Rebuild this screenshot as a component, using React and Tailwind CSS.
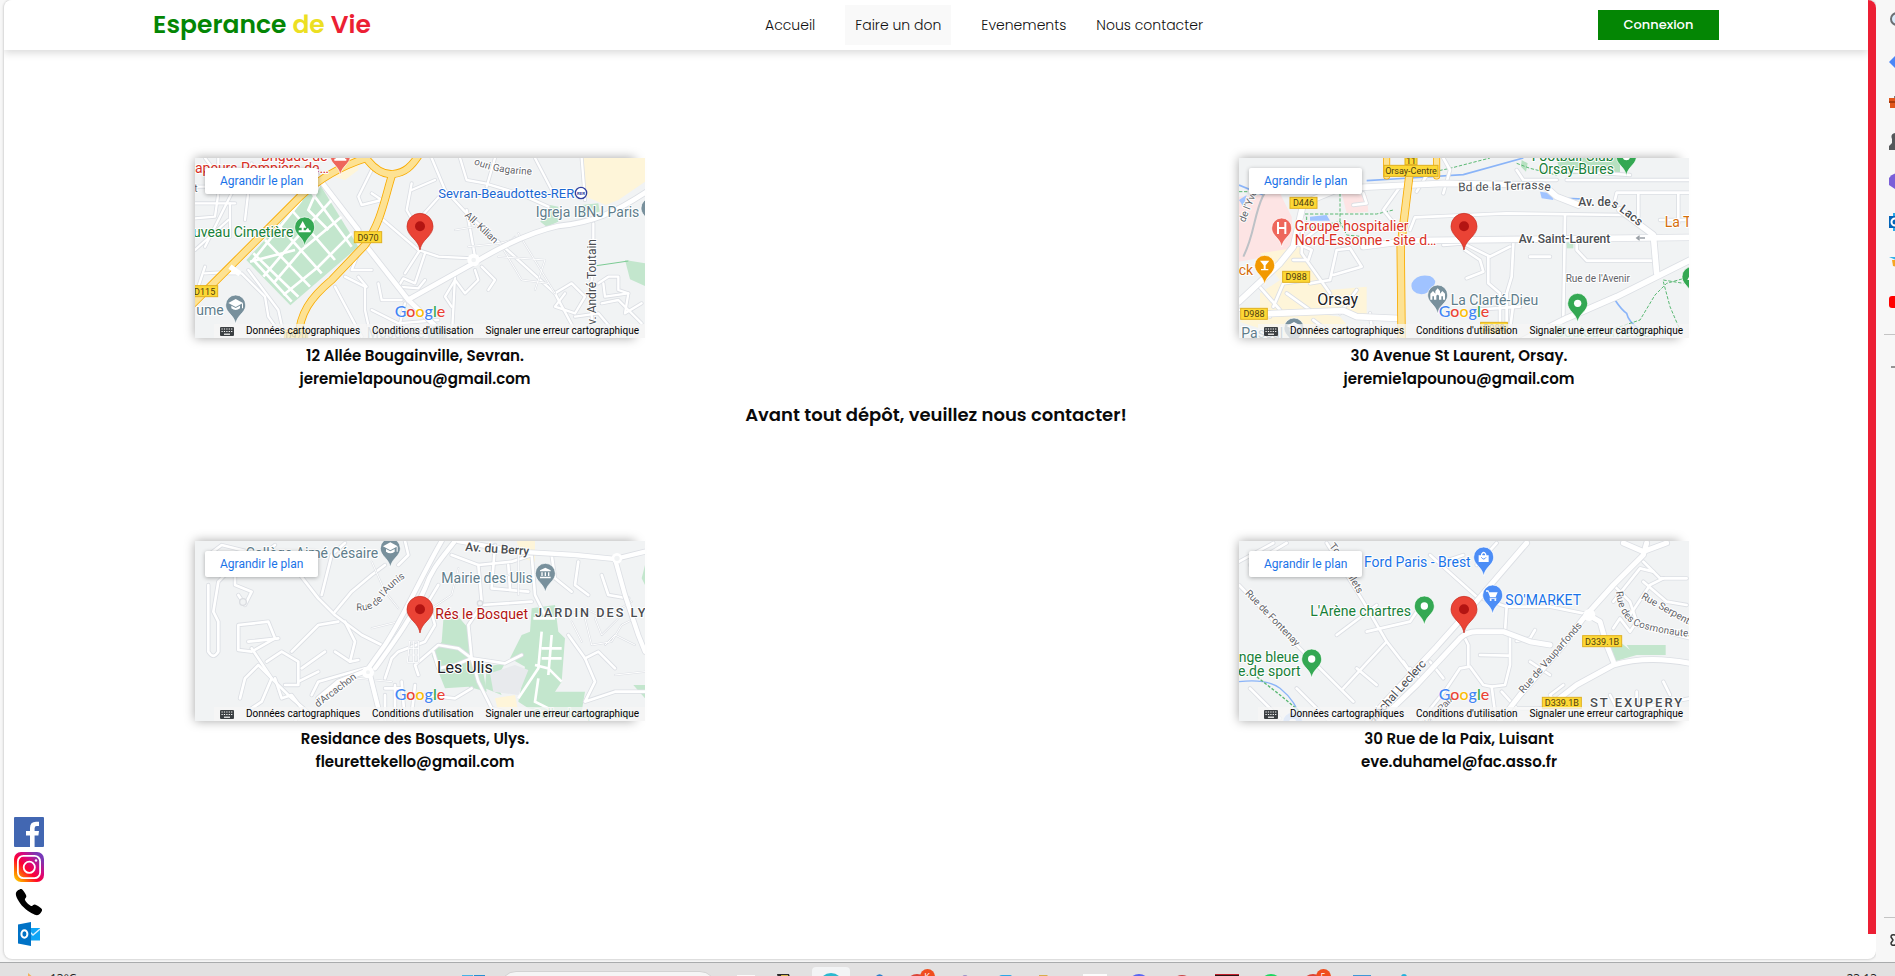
import React from "react";
import { IoCall } from "react-icons/io5";

const GREY = "#5f6368";
const SLATE = "#607d8b";
const GREEN = "#188038";

/* ---------- Map drawing helpers ---------- */

function Roads({ w = 9, casing = "#dcdfe4", fill = "#ffffff", extra = 5, paths }) {
  return (
    <g fill="none" strokeLinecap="round" strokeLinejoin="round">
      {paths.map((d, i) => (
        <path key={"c" + i} d={d} stroke={casing} strokeWidth={w + extra} />
      ))}
      {paths.map((d, i) => (
        <path key={"f" + i} d={d} stroke={fill} strokeWidth={w} />
      ))}
    </g>
  );
}

function Label({ x, y, size = 42, color = GREY, weight = 400, angle = 0, spacing, children }) {
  return (
    <text
      x={x}
      y={y}
      fontSize={size}
      fill={color}
      fontWeight={weight}
      transform={angle ? `rotate(${angle} ${x} ${y})` : undefined}
      stroke="#ffffff"
      strokeWidth="6"
      strokeLinejoin="round"
      paintOrder="stroke"
      letterSpacing={spacing}
    >
      {children}
    </text>
  );
}

function CurvedLabel({ id, d, size = 30, color = GREY, weight = 400, children }) {
  return (
    <g>
      <path id={id} d={d} fill="none" />
      <text fontSize={size} fill={color} fontWeight={weight} stroke="#ffffff" strokeWidth="6" paintOrder="stroke">
        <textPath href={"#" + id}>{children}</textPath>
      </text>
    </g>
  );
}

function Shield({ x, y, w, h = 33, children }) {
  return (
    <g>
      <rect x={x} y={y} width={w} height={h} fill="#fdd835" stroke="#e0b020" strokeWidth="3" />
      <text x={x + w / 2} y={y + h / 2 + 10} textAnchor="middle" fontSize="27" fill="#4d3d10">
        {children}
      </text>
    </g>
  );
}

function Pin({ x, y, color, children }) {
  return (
    <g transform={`translate(${x} ${y})`}>
      <path
        d="M0 57C-3 40-12 33-21 22C-27 15-30 8-30 0A30 30 0 1 1 30 0C30 8 27 15 21 22C12 33 3 40 0 57Z"
        fill={color}
        stroke="#ffffff"
        strokeWidth="2"
      />
      {children}
    </g>
  );
}

const Dot = () => <circle r="11" fill="#fff" />;
const Cap = () => (
  <g fill="#fff">
    <path d="M0-18L22-6L0 6L-22-6Z" />
    <path d="M-13 2V10Q0 20 13 10V2L0 9Z" />
    <path d="M19-5H22V10H19Z" />
  </g>
);
const Church = () => (
  <path d="M-22 14V-4L-14-12L-7-4V-12L0-20L7-12V-4L14-12L22-4V14H16V4H11V14H4V2Q0-4-4 2V14H-11V4H-16V14Z" fill="#fff" />
);

function Marker({ x, y }) {
  return (
    <g transform={`translate(${x} ${y})`}>
      <path
        d="M0 71C-4 50-15 42-27 28C-35 19-39 10-39 0A39 39 0 1 1 39 0C39 10 35 19 27 28C15 42 4 50 0 71Z"
        fill="#ea4335"
        stroke="#c5291c"
        strokeWidth="2"
      />
      <circle r="15" fill="#b31412" />
    </g>
  );
}

function MapFrame({ viewBox, children }) {
  return (
    <svg
      viewBox={viewBox}
      className="block h-[180px] w-[450px] bg-[#f1f3f4]"
      fontFamily="Roboto, Arial, sans-serif"
      aria-hidden="true"
    >
      {children}
    </svg>
  );
}

/* ---------- The four maps ---------- */

function SevranMap() {
  return (
    <MapFrame viewBox="30 24 1350 540">
      <path d="M1190 24H1380V95L1300 150L1262 165L1178 130L1200 90Z" fill="#fef5d9" />
      <path d="M455 24H520V60L480 90L448 80Z" fill="#fef5d9" />
      <path d="M1320 330L1380 340V408L1335 388Z" fill="#c3e6cd" />
      <path d="M1066 215L1095 165L1120 170V215L1085 230Z" fill="#c3e6cd" />
      <path d="M1190 165L1240 160L1244 185L1190 195Z" fill="#c3e6cd" />
      <path d="M1235 347L1330 333" stroke="#7ccb94" strokeWidth="3" />
      <Roads
        w={7}
        paths={[
          "M30 110H180L240 30", "M100 24V130L90 200L30 205", "M30 160H150", "M140 130L60 290", "M200 40L180 210",
          "M30 300L130 210", "M60 24L110 90", "M135 160V260", "M30 250H110",
          "M740 24L780 120L845 190L945 280L1110 430L1185 570", "M825 24L845 90L900 100L1000 130L1090 170",
          "M845 180L870 320", "M1050 24L1100 120L1180 130", "M560 130L590 150L530 165L520 140L560 60",
          "M930 24L905 110", "M780 120L700 210", "M595 210L700 300L760 320L860 325", "M680 100L665 180L700 240",
          "M750 90L680 120", "M720 310L690 400L655 385L640 410L700 415L720 390", "M705 300L660 370",
          "M870 360L880 390L840 430L810 390L780 440L800 470", "M890 350L930 390L910 420",
          "M1225 220V360L1215 420L1225 570", "M1110 430L1160 400L1200 440L1170 490L1110 470L1140 430",
          "M1240 400L1270 380L1300 380L1300 420L1330 430L1260 440L1255 400", "M1250 460L1300 450L1370 520",
          "M1330 430L1320 490L1370 460", "M1170 500L1240 490L1300 560", "M520 310L500 360L560 360",
          "M480 380L540 410V480L560 570", "M520 380L545 410", "M450 410L530 560", "M580 400L590 450H650",
          "M810 380L800 570", "M660 460L640 540", "M110 370H170L240 440L250 500L300 570", "M60 370L150 365",
          "M190 360L280 480L300 570", "M30 440L60 350", "M560 480L640 520L760 510", "M1190 24L1200 150",
        ]}
      />
      <Roads
        w={3}
        extra={3}
        paths={["M850 290L945 280L980 270L990 260", "M950 290L1010 390L1090 400", "M1000 250L1110 430", "M940 320L1080 330", "M1080 330L1050 420", "M870 230L810 240"]}
      />
      <path d="M400 96L520 290L316 466L184 330Z" fill="#c3e6cd" />
      <g stroke="#ffffff" strokeWidth="8" fill="none">
        <path d="M350 150L205 330L320 455M440 150L320 280L235 380M470 200L350 300L265 400M500 250L400 350L295 435" />
        <path d="M375 120L500 290M320 180L450 330M280 225L410 370M240 270L375 410M205 310L340 440" />
        <path d="M195 335L330 300M405 100L370 180L430 240" />
      </g>
      <Roads w={14} paths={["M672 448L860 343C930 300 1020 250 1120 228C1220 218 1290 190 1400 115", "M545 290L670 450L800 575", "M390 70L520 240"]} />
      <Roads w={19} casing="#f9ab00" fill="#fde293" paths={["M0 485L150 335L345 140Q430 60 545 24", "M340 575C340 490 380 440 440 390L540 285C590 215 600 140 622 72", "M540 20C565 55 595 75 625 72C660 68 680 50 705 10"]} />
      <path d="M135 350L165 372" stroke="#fff" strokeWidth="16" />
      <circle cx="866" cy="330" r="13" fill="#f1f3f4" stroke="#fff" strokeWidth="12" />
      <Label x={228} y={32} color="#d93025">Brigade de</Label>
      <Label x={30} y={68} color="#d93025">apeurs Pompiers de…</Label>
      <Pin x={466} y={18} color="#ee675c"><path d="M-14 2H14V8H18V14H-18V8H-14Z" fill="#fff" /></Pin>
      <Label x={28} y={127} size={30}>t</Label>
      <CurvedLabel id="gagarine" d="M866 42Q940 75 1060 74">ouri Gagarine</CurvedLabel>
      <Label x={760} y={143} size={39} color="#1967d2">Sevran-Beaudottes-RER</Label>
      <circle cx="1188" cy="129" r="17" fill="#fff" stroke="#303f9f" strokeWidth="4" />
      <text x="1188" y="134" textAnchor="middle" fontSize="13" fontWeight="700" fill="#303f9f">RER</text>
      <Label x={1052} y={202} color={SLATE}>Igreja IBNJ Paris</Label>
      <Pin x={1398} y={174} color="#78909c" />
      <Label x={838} y={198} size={30} angle={43}>All. Kilian</Label>
      <Label x={1234} y={524} size={36} angle={-90} color="#4a4d51">v. André Toutain</Label>
      <Label x={24} y={262} color={GREEN}>uveau Cimetière</Label>
      <Pin x={359} y={231} color="#34a853"><path d="M-6-18L-17 2H-9V10H-18V16H18V10H14L10 2L4 8V10H-3V2H5Z" fill="#fff" /></Pin>
      <Shield x={508} y={245} w={82}>D970</Shield>
      <Shield x={20} y={407} w={78}>D115</Shield>
      <Label x={34} y={494} color={SLATE}>ume</Label>
      <Pin x={152} y={465} color="#78909c"><Cap /></Pin>
      <Label x={545} y={565} color="#90a4ae">Mosquée</Label>
      <Pin x={757} y={556} color="#b0bec5" />
      <Shield x={298} y={540} w={70}>D970</Shield>
      <Marker x={705} y={229} />
    </MapFrame>
  );
}

function OrsayMap() {
  return (
    <MapFrame viewBox="27 24 1350 540">
      <path d="M27 140L150 130L185 200L190 290L160 310L27 335Z" fill="#fde4e4" />
      <path d="M335 130L410 135L415 185L350 190Z" fill="#fde4e4" />
      <path d="M90 310L215 290L235 340L300 420L410 410V500L240 480H90V430L150 390Z" fill="#fef5d9" />
      <path d="M27 515L110 470L330 500L390 570H200Z" fill="#fef5d9" />
      <path d="M980 24H1170V72H990Z" fill="#b7e1c1" />
      <path d="M875 30L893 40L888 65L873 50Z" fill="#b7e1c1" />
      <path d="M1010 270H1030V295H1010Z" fill="#c3e6cd" />
      <g fill="none" stroke="#8ab4f8" strokeWidth="5">
        <path d="M27 105L100 135M410 92L540 84L700 74L880 24M950 120L1010 145L1060 147M1155 450Q1175 480 1190 490Q1195 515 1230 540" />
      </g>
      <path d="M545 400Q560 370 600 378Q625 390 610 410Q590 440 560 430Q540 420 545 400Z" fill="#a0c3ff" />
      <path d="M240 200L290 195L300 212L240 212ZM930 125L965 130L970 150L935 145Z" fill="#a0c3ff" />
      <path d="M27 150L50 135L40 170Z" fill="#a0c3ff" />
      <g fill="none" stroke="#5bb974" strokeWidth="3" strokeDasharray="10 5">
        <path d="M27 125H90M225 192H440L490 180M330 130V230M230 200V235L330 215L350 255L400 260M540 80L660 55L780 24M860 40L900 55L980 75" />
        <path d="M1140 540L1230 510L1275 435L1310 400L1380 380M1300 395L1320 470L1350 540M1300 390L1360 400" />
      </g>
      <Roads
        w={8}
        paths={[
          "M540 240L555 202L830 190L1180 195L1270 250", "M1150 170L1160 128H1380", "M1225 130V200", "M1345 130V220",
          "M1040 280V300L1070 332H1270", "M1005 195L1000 500", "M705 300L750 330L760 365L710 385",
          "M640 285L700 280L780 320L840 290", "M775 320V400L810 430V570", "M850 280L845 380L830 430V520", "M900 320H960",
          "M725 480L870 470", "M640 130L660 60L640 24", "M560 125L600 60", "M860 60L880 90H980", "M980 60L1200 75",
          "M1010 90H1380", "M300 390L320 300L360 295L395 350L310 375", "M300 390L240 400", "M190 290L260 240",
          "M190 330L235 330L245 300L200 280", "M220 200L215 310L300 430", "M130 470L160 400L230 390",
          "M330 490L380 420", "M250 510L330 570", "M400 130L410 160L370 165", "M30 480L120 500", "M80 400L150 480",
          "M240 480L170 430", "M420 490L430 570", "M500 230L460 180L510 110", "M1380 210H1290", "M840 540L850 460",
        ]}
      />
      <Roads w={17} paths={["M27 455L150 340L190 290L220 160L330 115L640 100L940 105L980 140L1045 165M1170 180L1270 255L1280 370", "M400 290L540 272L1380 262", "M95 492L340 482L380 500L500 505", "M870 575L1010 505L1160 440L1380 330"]} />
      <Roads w={20} casing="#f9ab00" fill="#fde293" paths={["M545 20L512 290L515 575"]} />
      <Roads w={16} casing="#f9ab00" fill="#fde293" paths={["M470 20V78", "M620 20V78"]} />
      <path d="M40 320C90 220 60 150 160 60" stroke="#bdc1c6" strokeWidth="6" fill="none" />
      <path d="M1220 264H1245M1229 257L1220 264L1229 271" stroke="#9aa0a6" strokeWidth="4" fill="none" />
      <Shield x={525} y={18} w={36} h={26}>11</Shield>
      <Shield x={462} y={46} w={162}>Orsay-Centre</Shield>
      <Shield x={180} y={142} w={81}>D446</Shield>
      <Shield x={158} y={364} w={81}>D988</Shield>
      <Shield x={32} y={475} w={80}>D988</Shield>
      <Shield x={752} y={517} w={80}>D988</Shield>
      <Label x={905} y={32} color={GREEN}>Football Club</Label>
      <Label x={926} y={72} color={GREEN}>Orsay-Bures</Label>
      <Pin x={1189} y={20} color="#34a853"><Dot /></Pin>
      <CurvedLabel id="terrasse" size={36} color="#4a4d51" d="M685 124L880 119Q920 112 980 130">Bd de la Terrasse</CurvedLabel>
      <CurvedLabel id="lacs" size={36} color="#4a4d51" weight={500} d="M1045 169L1140 169Q1165 175 1250 250">Av. des Lacs</CurvedLabel>
      <Label x={866} y={280} size={36} color="#4a4d51" weight={500}>Av. Saint-Laurent</Label>
      <Label x={1304} y={230} color="#d56e0c">La Table</Label>
      <Label x={1007} y={396} size={30}>Rue de l'Avenir</Label>
      <Label x={44} y={218} size={30} angle={-68}>de l'Yvette</Label>
      <Label x={194} y={243} color="#d93025">Groupe hospitalier</Label>
      <Label x={194} y={286} color="#d93025">Nord-Essonne - site d…</Label>
      <Pin x={155} y={234} color="#ee675c"><path d="M-14-18H-8V-3H8V-18H14V18H8V3H-8V18H-14Z" fill="#fff" /></Pin>
      <Label x={26} y={374} color="#d56e0c">ck</Label>
      <Pin x={104} y={346} color="#f29900"><path d="M-14-14H14L3 0V11H11V15H-11V11H-3V0Z" fill="#fff" /></Pin>
      <Label x={262} y={466} size={48} color="#202124">Orsay</Label>
      <Label x={662} y={465} color={SLATE}>La Clarté-Dieu</Label>
      <Pin x={623} y={435} color="#78909c"><Church /></Pin>
      <Pin x={1043} y={460} color="#34a853"><Dot /></Pin>
      <Pin x={1386} y={380} color="#34a853"><path d="M-14 10L-4-10L6 10Z" fill="#fff" /></Pin>
      <Label x={34} y={563} color={SLATE}>Pascal</Label>
      <Pin x={192} y={534} color="#78909c"><Cap /></Pin>
      <Label x={976} y={560} color="#81c995">Boulodrome de</Label>
      <Marker x={702} y={229} />
    </MapFrame>
  );
}

function UlisMap() {
  return (
    <MapFrame viewBox="30 18 1350 540">
      <path d="M775 255L820 245L850 280L860 365L890 385L905 470L850 455L780 460L740 360L770 320Z" fill="#c3e6cd" />
      <path d="M1040 220L1110 210L1120 290L1140 310L1130 440L1110 470L1200 470L1190 530L1140 545L1030 520L1000 500L1020 395L975 370L1010 300L1035 290Z" fill="#c3e6cd" />
      <path d="M905 395L960 385L930 440L950 480L900 460Z" fill="#c3e6cd" />
      <path d="M915 415L990 390L1030 405L1000 480L925 470Z" fill="#e8eaed" />
      <path d="M1375 110L1380 90V150L1370 130ZM1345 450H1380V490Z" fill="#c3e6cd" />
      <path d="M995 18H1050V80L1010 70ZM930 490L990 480L1000 530L940 530Z" fill="#fef5d9" />
      <Roads
        w={8}
        paths={[
          "M70 150V350Q85 375 100 350V260L85 230L100 140L130 110L180 110L200 60", "M70 60L110 30L230 60L270 30",
          "M160 180L180 210L200 170L150 150L150 100L200 50", "M330 100L400 190L450 240L530 300L590 330",
          "M450 230L500 170L560 120L600 90", "M410 180L440 60L480 24", "M640 90L670 60L660 18",
          "M460 260L400 270L320 350", "M480 260L510 320L495 380L450 350", "M495 380L520 375",
          "M160 270L250 260L270 310L200 350L160 345Z", "M190 320L280 310", "M200 340L260 430L320 490L380 540",
          "M245 380L290 350L340 380V450L300 450", "M165 490L180 430L220 390L260 430L230 500L200 520",
          "M270 430L290 490L320 480L350 520L330 560", "M350 400L420 350M340 440L400 410", "M380 480L400 440L540 400",
          "M600 430L620 370L640 350L720 320L750 270L730 200L760 150",
          "M600 460H650M600 480V560M630 450V560M650 440L660 560M690 450L680 540", "M700 420L690 390L760 330L820 340L860 370L960 385L1010 360",
          "M745 350L760 400L810 390L860 370L880 440L920 520L1000 540", "M860 370L850 270L890 210L1040 200",
          "M800 60L880 90L980 80L1040 60", "M880 90L890 200", "M930 30L920 160L1030 170", "M970 90L975 160",
          "M1040 60L1050 180L1080 240", "M1100 60L1110 130L1160 170", "M1180 80L1170 150L1210 180",
          "M1150 300L1200 370L1240 350L1290 400",
          "M1200 370L1230 440L1200 500L1290 470H1380", "M1250 120L1270 180L1330 190", "M860 460L810 490L720 480",
        ]}
      />
      <g fill="none" stroke="#ffffff" strokeWidth="8">
        <path d="M1050 390L1090 400L1130 440M1070 290L1060 400L1000 490M1100 300L1090 420M1070 340H1130M1070 370H1130M1060 430L1050 500L1110 530M1045 250H1110" />
      </g>
      <Roads
        w={3}
        extra={3}
        paths={[
          "M560 80L600 170L640 220", "M820 100L800 180L740 220", "M1160 260L1190 320M1230 250L1250 300L1300 250M1260 330L1290 300L1350 330",
          "M1000 110L940 130M1000 60V180", "M560 280L640 260", "M520 430L620 440", "M1290 420L1380 410",
          "M675 318H700V382H668Z", "M672 340H700M670 360H700M686 320V380", "M1150 240L1200 220L1260 250L1340 200",
          "M1200 250L1220 330L1280 320L1310 270L1350 250",
        ]}
      />
      <Roads w={13} paths={["M770 18C700 140 660 240 600 330L550 400L590 560", "M810 18C770 70 740 100 720 160C680 250 620 330 570 400", "M820 18L1000 50L1170 60L1290 72L1380 50", "M1290 72L1320 180L1360 300L1380 350", "M400 490L460 440L550 405"]} />
      <circle cx="549" cy="412" r="12" fill="#f1f3f4" stroke="#fff" strokeWidth="12" />
      <circle cx="1296" cy="70" r="12" fill="#f1f3f4" stroke="#fff" strokeWidth="8" />
      <circle cx="885" cy="205" r="8" fill="#f1f3f4" stroke="#dadce0" strokeWidth="4" />
      <circle cx="174" cy="201" r="10" fill="#f1f3f4" stroke="#dadce0" strokeWidth="4" />
      <Label x={182} y={69} color={SLATE}>Collège Aimé Césaire</Label>
      <Pin x={616} y={40} color="#78909c"><Cap /></Pin>
      <Label x={840} y={47} size={36} angle={4} color="#4a4d51" weight={500}>Av. du Berry</Label>
      <Label x={769} y={144} color={SLATE}>Mairie des Ulis</Label>
      <Pin x={1081} y={115} color="#78909c"><path d="M0-17L16-9V-6H-16V-9ZM-12-3H-8V8H-12ZM-2-3H2V8H-2ZM8-3H12V8H8ZM-16 10H16V15H-16Z" fill="#fff" /></Pin>
      <CurvedLabel id="aunis" d="M514 226Q570 230 595 190T690 110">Rue de l'Aunis</CurvedLabel>
      <Label x={1050} y={247} size={38} weight={500} color="#4a4d51" spacing="6">JARDIN DES LYS</Label>
      <Label x={751} y={251} color="#b31412">Rés le Bosquet</Label>
      <Label x={756} y={413} size={48} color="#202124">Les Ulis</Label>
      <Label x={398} y={518} size={30} angle={-37}>d'Arcachon</Label>
      <Label x={1045} y={548} size={38} color="#81c995">Salle de sport Les</Label>
      <Marker x={705} y={223} />
    </MapFrame>
  );
}

function LuisantMap() {
  return (
    <MapFrame viewBox="27 18 1350 540">
      <path d="M1140 330L1175 325L1200 345L1190 330H1307V360L1220 360L1150 380Z" fill="#c3e6cd" />
      <path d="M27 440Q110 430 150 460Q200 500 215 560" fill="none" stroke="#8ab4f8" strokeWidth="4" />
      <path d="M27 410L80 425L150 480L210 530" fill="none" stroke="#5bb974" strokeWidth="4" strokeDasharray="9 5" />
      <Roads
        w={8}
        paths={[
          "M27 80L130 24", "M60 90L170 24", "M290 24L400 200L470 320L540 410", "M470 320L340 460", "M27 150L190 320L330 460L370 500",
          "M320 300L440 210", "M410 290L540 260L560 230", "M600 60L740 185L830 215L960 215L1060 235", "M830 215L825 290",
          "M640 80L700 60", "M860 318L900 310L915 285", "M560 570L610 510L650 460L690 400L720 395L760 450L785 455L800 570",
          "M785 455L825 450L840 390V300", "M750 360L835 362", "M700 300L715 330V390", "M815 470L860 520H950",
          "M600 380L640 430", "M540 410L520 380", "M540 400L570 430", "M1150 150L1200 200L1220 260L1200 290L1170 250L1150 280",
          "M1150 200L1230 100L1270 110L1290 130L1370 130", "M1200 240L1260 150L1300 130", "M1240 80L1270 110",
          "M1240 140L1310 200L1370 210", "M1220 270L1380 310", "M1000 450L960 480L990 530", "M900 380L960 420", "M850 520L860 570",
          "M200 460L300 560", "M60 460L150 550", "M1140 480L1160 520", "M1300 440L1320 480", "M930 520L960 570", "M1220 470V520L1380 490",
          "M740 90L800 24", "M380 400L440 450",
        ]}
      />
      <Roads w={15} paths={["M400 575L470 495L620 335L700 245L890 24", "M430 575L560 450L690 310Q710 290 740 290H820L900 320L960 330", "M1250 24L1240 60L1150 150L1060 250L1000 330L870 480L800 570", "M1180 24L1240 50L1310 24", "M1075 240L1110 260L1130 330L1150 380", "M950 520L1040 450L1150 390Q1250 360 1380 385"]} />
      <circle cx="1078" cy="240" r="18" fill="#fff" />
      <Label x={297} y={34} size={30} angle={52}>Tou</Label>
      <Label x={352} y={122} size={30} angle={60}>illets</Label>
      <Label x={44} y={176} size={30} angle={46}>Rue de Fontenay</Label>
      <Label x={402} y={96} color="#1a73e8">Ford Paris - Brest</Label>
      <Pin x={761} y={66} color="#4c8df6"><path d="M-15-5H15V15H-15ZM-8-5V-9Q0-23 8-9V-5H4V-8Q0-15-4-8V-5Z" fill="#fff" /><path d="M-7 1Q0 11 7 1" stroke="#4c8df6" strokeWidth="3" fill="none" /></Pin>
      <Label x={826} y={210} color="#1a73e8">SO'MARKET</Label>
      <Pin x={788} y={180} color="#4c8df6"><path d="M-20-14H-13L-10-8H15L9 6H-8L-14-10H-20ZM-9 8H11V11H-9Z" fill="#fff" /><circle cx="-6" cy="15" r="3" fill="#fff" /><circle cx="8" cy="15" r="3" fill="#fff" /></Pin>
      <Label x={241} y={243} color={GREEN}>L'Arène chartres</Label>
      <Pin x={583} y={213} color="#34a853"><Dot /></Pin>
      <Label x={26} y={381} color={GREEN}>nge bleue</Label>
      <Label x={24} y={423} color={GREEN}>e.de sport</Label>
      <Pin x={245} y={372} color="#34a853"><Dot /></Pin>
      <Label x={428} y={568} size={36} angle={-48} color="#4a4d51">aréchal Leclerc</Label>
      <Label x={880} y={476} size={30} angle={-49}>Rue de Vauparfonds</Label>
      <Label x={590} y={580} size={28} angle={-47}>de la Paix</Label>
      <CurvedLabel id="cosmonautes" d="M1158 170Q1165 245 1215 272Q1270 295 1400 308">Rue des Cosmonautes</CurvedLabel>
      <Label x={1232} y={190} size={30} angle={29}>Rue Serpente</Label>
      <Shield x={1058} y={302} w={117}>D339.1B</Shield>
      <Shield x={937} y={487} w={117}>D339.1B</Shield>
      <Label x={1080} y={515} size={39} weight={500} color="#4a4d51" spacing="6">ST EXUPERY</Label>
      <Pin x={188} y={562} color="#a8c7fa"><Dot /></Pin>
      <Marker x={702} y={223} />
    </MapFrame>
  );
}

/* ---------- Cards ---------- */

function KeyboardIcon() {
  return (
    <svg viewBox="0 0 14 9" className="h-[9px] w-[14px]" aria-hidden="true">
      <rect width="14" height="9" rx="1" fill="#3c4043" />
      <path d="M1.5 2H12.5M1.5 4.5H12.5" stroke="#fff" strokeWidth="1.2" strokeDasharray="1.2 1.2" />
      <path d="M4 7.2H10" stroke="#fff" strokeWidth="1.2" />
    </svg>
  );
}

function GoogleLogo() {
  return (
    <span className="absolute bottom-[17px] left-1/2 -translate-x-1/2 font-[Lato,sans-serif] text-[16px] leading-5 font-medium [text-shadow:0_0_2px_#fff,0_0_2px_#fff]">
      <span className="text-[#4285f4]">G</span>
      <span className="text-[#ea4335]">o</span>
      <span className="text-[#fbbc04]">o</span>
      <span className="text-[#4285f4]">g</span>
      <span className="text-[#34a853]">l</span>
      <span className="text-[#ea4335]">e</span>
    </span>
  );
}

function Place({ map, address, email }) {
  return (
    <section className="w-[440px]">
      <div className="h-[180px] shadow-[0_0_10px_rgba(0,0,0,0.35)]">
        <div className="relative w-[450px] font-[Roboto,Arial,sans-serif]">
          {map}
          <a href="#plan" className="absolute top-[10px] left-[10px] rounded-xs bg-white px-[15px] text-[12px] leading-[26px] text-[#1a73e8] shadow-[0_1px_4px_rgba(0,0,0,0.3)]">
            Agrandir le plan
          </a>
          <GoogleLogo />
          <div className="absolute right-0 bottom-0 flex h-[14px] items-center gap-3 bg-[#f5f5f5]/75 pr-[6px] pl-[6px] text-[10px] leading-[14px] whitespace-nowrap text-black">
            <button type="button" aria-label="Raccourcis clavier"><KeyboardIcon /></button>
            <a href="#donnees">Données cartographiques</a>
            <a href="#conditions">Conditions d'utilisation</a>
            <a href="#erreur">Signaler une erreur cartographique</a>
          </div>
        </div>
      </div>
      <div className="pt-[6px] text-center text-[15px] leading-[23px] font-semibold text-[#0a0a0a]">
        <p>{address}</p>
        <p>{email}</p>
      </div>
    </section>
  );
}

/* ---------- Social links ---------- */

function Facebook() {
  return (
    <svg viewBox="0 0 30 30" className="size-[30px]" aria-hidden="true">
      <rect width="30" height="30" rx="1" fill="#4267b2" />
      <path d="M16 30V18.5H12V14H16V11Q16 4.8 22 4.8H25V9H22.8Q20.6 9 20.6 11.2V14H25L24.4 18.5H20.6V30Z" fill="#fff" />
    </svg>
  );
}

function Instagram() {
  return (
    <svg viewBox="0 0 30 30" className="size-[30px]" aria-hidden="true">
      <defs>
        <linearGradient id="insta" x1="0" y1="1" x2="1" y2="0">
          <stop offset="0" stopColor="#ffe600" />
          <stop offset="0.2" stopColor="#ff7a00" />
          <stop offset="0.42" stopColor="#ff0030" />
          <stop offset="0.62" stopColor="#d6087f" />
          <stop offset="0.82" stopColor="#8134af" />
          <stop offset="1" stopColor="#6a3fc4" />
        </linearGradient>
      </defs>
      <rect width="30" height="30" rx="7" fill="url(#insta)" />
      <rect x="3.9" y="3.9" width="22.2" height="22.2" rx="5.5" fill="none" stroke="#fff" strokeWidth="1.8" />
      <circle cx="15.3" cy="15.3" r="5.6" fill="none" stroke="#fff" strokeWidth="1.8" />
      <circle cx="22" cy="8.5" r="1.2" fill="#fff" />
    </svg>
  );
}

function Outlook() {
  return (
    <svg viewBox="0 0 24 24" className="size-6" aria-hidden="true">
      <path d="M12 6H23V18.5H12Z" fill="#0ea5f5" />
      <path d="M13 10L16 13L23 7" stroke="#d6efff" strokeWidth="1.4" fill="none" />
      <path d="M1 2.5L14 0V24L1 21.5Z" fill="#0072c6" />
      <ellipse cx="7.4" cy="12" rx="3" ry="3.7" fill="none" stroke="#fff" strokeWidth="2" />
    </svg>
  );
}

/* ---------- Browser rail and task bar ---------- */

const railIcons = [
  { name: "Rechercher", art: <><circle cx="8" cy="7" r="6" fill="#d7ecfb" stroke="#6b6f73" strokeWidth="2" /><path d="M12 12L18 18" stroke="#6b6f73" strokeWidth="3" /></> },
  { name: "Tag", art: <path d="M0 10L9 1H18V10L9 19Z" fill="#4a86f7" /> },
  { name: "Outils", art: <><path d="M5 4H15V7H5Z" fill="#7a7d80" /><path d="M0 6H20V16H1V11H0Z" fill="#e0561b" /><path d="M0 10H20" stroke="#a83a0c" strokeWidth="2" /></> },
  { name: "Jeux", art: <path d="M0 18V14L3 11V7Q1 2 6 1Q11 2 9 7V11L13 14V18Z" fill="#55585b" /> },
  { name: "Microsoft 365", art: <path d="M0 6Q3 1 10 1Q18 3 19 12Q14 19 6 17L0 13Z" fill="#7a5fd8" /> },
  { name: "Outlook", art: <><path d="M4 1H20V19H4Z" fill="#28a8ea" /><path d="M0 4H12V16H0Z" fill="#0364b8" /><circle cx="6" cy="10" r="3.5" fill="none" stroke="#fff" strokeWidth="2" /></> },
  { name: "Favoris", art: <><path d="M0 5H20L14 11Z" fill="#35b0ea" /><path d="M3 8H16L12 16L4 14Z" fill="#f5a623" /></> },
  { name: "YouTube", art: <><rect y="4" width="20" height="12" rx="3" fill="#f00" /><path d="M8 7L13 10L8 13Z" fill="#fff" /></> },
];

function Rail() {
  return (
    <aside aria-label="Barre latérale" className="flex w-[19px] shrink-0 flex-col overflow-hidden bg-[#f7f7f7] pt-3">
      {railIcons.map((icon) => (
        <button key={icon.name} type="button" aria-label={icon.name} className="ml-[13px] flex h-10 w-5 items-start">
          <svg viewBox="0 0 20 20" className="size-5 shrink-0" aria-hidden="true">{icon.art}</svg>
        </button>
      ))}
      <div className="mt-[2px] ml-2 h-px bg-[#c4c4c4]" />
      <button type="button" aria-label="Ajouter" className="mt-[22px] ml-[15px] w-5">
        <svg viewBox="0 0 20 20" className="size-5" aria-hidden="true"><path d="M0 10H16M8 2V18" stroke="#333" strokeWidth="1.2" /></svg>
      </button>
      <div className="mt-auto ml-2 h-px shrink-0 bg-[#c4c4c4]" />
      <button type="button" aria-label="Paramètres" className="mt-3 mb-3 ml-[14px] w-5">
        <svg viewBox="0 0 20 20" className="size-5" aria-hidden="true">
          <path d="M5 5Q1 4 1 7L3 10L1 13Q1 16 5 15L8 18H12L15 15Q19 16 19 13L17 10L19 7Q19 4 15 5L12 2H8Z" fill="none" stroke="#333" strokeWidth="1.5" />
          <circle cx="10" cy="10" r="3" fill="none" stroke="#333" strokeWidth="1.5" />
        </svg>
      </button>
    </aside>
  );
}

const tasks = [
  { name: "Bureau", art: <path d="M13 12H31V20H13Z" fill="#fafafa" /> },
  { name: "Explorateur", art: <><path d="M9 11H21L24 20H11Z" fill="#2b2b2b" /><path d="M13 12H20V20H14Z" fill="#d8b84a" /></> },
  { name: "Edge", art: <><rect x="0" y="4" width="38" height="20" rx="4" fill="#f3f4f5" /><circle cx="19" cy="22" r="12" fill="#2cb9cf" /></> },
  { name: "Visual Studio Code", art: <path d="M20 13Q24 9 28 14V20H18Z" fill="#2b7fc9" /> },
  { name: "Courrier", badge: "K", art: <circle cx="17" cy="22" r="11" fill="#dc4437" /> },
  { name: "Teams", art: <circle cx="21" cy="15" r="3" fill="#9b8fc9" /> },
  { name: "Calendrier", art: <path d="M10 14Q12 12 14 12H22Q24 12 24 14Z" fill="#2ba7e8" /> },
  { name: "Fichiers", art: <path d="M7 12H15L17 14H7Z" fill="#d9ad4b" /> },
  { name: "Notes", art: <path d="M7 11H31V20H7Z" fill="#fcfcfc" /> },
  { name: "Discord", art: <circle cx="19" cy="22" r="11" fill="#5865f2" /> },
  { name: "Chrome", art: <circle cx="18" cy="23" r="11" fill="#c74444" /> },
  { name: "Netflix", art: <><path d="M7 11H31V20H7Z" fill="#2a1515" /><path d="M7 11H31V12H7Z" fill="#c0202c" /></> },
  { name: "Spotify", art: <circle cx="19" cy="22" r="11" fill="#1ed760" /> },
  { name: "Messages", badge: "5", art: <circle cx="17" cy="22" r="11" fill="#dc4437" /> },
  { name: "Bloc-notes", art: <path d="M13 12H31V14H13Z" fill="#3f97d6" /> },
  { name: "Outils", art: <circle cx="20" cy="14" r="3" fill="#22b1dc" /> },
];

function TaskBar() {
  return (
    <footer className="flex h-[14px] shrink-0 items-start overflow-hidden border-t border-[#a9abac] bg-[#e2e1e1] font-[Open_Sans,sans-serif] text-[12px] leading-4 text-[#222]">
      <div className="flex flex-1 items-start gap-3 pt-2 pl-[26px]">
        <svg viewBox="0 0 12 12" className="size-3" aria-hidden="true"><path d="M2 2L9 8H2Z" fill="#f2b25a" /></svg>
        <span>13°C</span>
      </div>
      <div className="flex items-start pr-[14px]">
        <button type="button" aria-label="Démarrer" className="mr-[15px] pt-3">
          <svg viewBox="0 0 23 6" className="h-[6px] w-[23px]" aria-hidden="true"><path d="M0 0H11V6H0Z" fill="#46b4e8" /><path d="M12 0H23V6H12Z" fill="#258fd2" /></svg>
        </button>
        <button type="button" aria-label="Recherche Windows" className="mt-2 mr-[8px] h-8 w-[216px] rounded-full border border-[#d2d2d2] bg-[#f5f5f5]" />
        {tasks.map((t) => (
          <button key={t.name} type="button" aria-label={t.name} className="relative w-11">
            <svg viewBox="0 0 44 20" className="h-5 w-11" aria-hidden="true">{t.art}</svg>
            {t.badge && (
              <span className="absolute top-[6px] left-[20px] size-[15px] rounded-full bg-[#f04e1f] text-center text-[9px] leading-[15px] text-white">{t.badge}</span>
            )}
          </button>
        ))}
      </div>
      <time className="flex-1 pt-2 pr-[18px] text-right">23:13</time>
    </footer>
  );
}

/* ---------- Page ---------- */

export default function App() {
  return (
    <div className="flex min-h-screen flex-col bg-[#f7f7f7] font-[Poppins,Inter,sans-serif]">
      <div className="flex flex-1">
        <div className="mb-[3px] ml-1 flex flex-1 overflow-hidden rounded-lg bg-white shadow-[0_0_2px_1px_#d5d5d5]">
          <div className="flex min-w-0 flex-1 flex-col">
            <header className="grid h-[50px] grid-cols-[1fr_auto_1fr] items-center bg-white px-[8%] shadow-[0_3px_8px_rgba(0,0,0,0.15)]">
              <a href="#accueil" className="text-[25px] leading-8 font-semibold text-[#048604]">
                Esperance <span className="text-[#ecdf22]">de</span> <span className="text-[#ec1f34]">Vie</span>
              </a>
              <nav className="mr-[-96px] flex items-center gap-[30px] text-[14px] leading-10 font-light text-[#111]" aria-label="Navigation principale">
                <a href="#accueil">Accueil</a>
                <a href="#don" className="bg-[#f9f9f9] px-[10px]">Faire un don</a>
                <a href="#evenements">Evenements</a>
                <a href="#contact">Nous contacter</a>
              </nav>
              <button type="button" className="h-[30px] w-[121px] justify-self-end bg-[#048604] text-[13px] leading-[30px] font-medium text-white">
                Connexion
              </button>
            </header>

            <main className="flex flex-1 flex-col pt-[108px]">
              <div className="flex justify-between pr-[189px] pl-[191px]">
                <Place map={<SevranMap />} address="12 Allée Bougainville, Sevran." email="jeremie1apounou@gmail.com" />
                <Place map={<OrsayMap />} address="30 Avenue St Laurent, Orsay." email="jeremie1apounou@gmail.com" />
              </div>
              <h1 className="pt-[13px] pb-[114px] text-center text-[18px] leading-6 font-semibold text-[#0a0a0a]">
                Avant tout dépôt, veuillez nous contacter!
              </h1>
              <div className="flex justify-between pr-[189px] pl-[191px]">
                <Place map={<UlisMap />} address="Residance des Bosquets, Ulys." email="fleurettekello@gmail.com" />
                <Place map={<LuisantMap />} address="30 Rue de la Paix, Luisant" email="eve.duhamel@fac.asso.fr" />
              </div>
              <div className="mt-auto mb-[13px] flex w-[50px] flex-col items-center gap-[5px]">
                <a href="#facebook" aria-label="Facebook"><Facebook /></a>
                <a href="#instagram" aria-label="Instagram"><Instagram /></a>
                <a href="#telephone" aria-label="Téléphone"><IoCall className="size-[30px] text-black" /></a>
                <a href="#outlook" aria-label="Outlook"><Outlook /></a>
              </div>
            </main>
          </div>
          <div className="mb-[25px] w-2 shrink-0 bg-[#ec1f34]" />
        </div>
        <Rail />
      </div>
      <TaskBar />
    </div>
  );
}
